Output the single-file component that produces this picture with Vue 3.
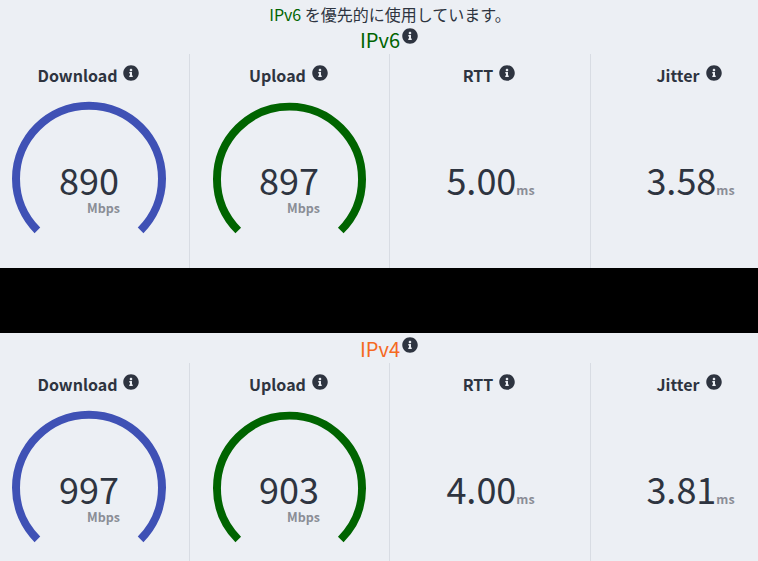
<template>
  <div class="page">
    <p class="notice"><span class="v6">IPv6</span> を優先的に使用しています。</p>
    <template v-for="(sec, i) in sections" :key="sec.name">
      <div v-if="i" class="band"></div>
      <section class="panel">
        <h2 class="family" :class="sec.cls">{{ sec.name }}<svg class="info up" viewBox="0 0 512 512"><path :d="infoPath" /></svg></h2>
        <div class="stats">
          <div v-for="s in sec.stats" :key="s.label" class="stat">
            <div class="label">{{ s.label }}<svg class="info" viewBox="0 0 512 512"><path :d="infoPath" /></svg></div>
            <div v-if="s.gauge" class="gauge">
              <svg :width="s.size" :height="s.size" viewBox="0 -0.7 154 154">
                <path d="M25.4 128.6 A73 73 0 1 1 128.6 128.6" fill="none" :stroke="s.gauge" stroke-width="8" />
              </svg>
              <div class="gauge-value">{{ s.value }}</div>
              <div class="gauge-unit">Mbps</div>
            </div>
            <div v-else class="plain"><span class="num">{{ s.value }}</span><span class="ms">ms</span></div>
          </div>
        </div>
      </section>
    </template>
  </div>
</template>

<script setup>
const infoPath = 'M256 8C119.043 8 8 119.083 8 256c0 136.997 111.043 248 248 248s248-111.003 248-248C504 119.083 392.957 8 256 8zm0 110c23.196 0 42 18.804 42 42s-18.804 42-42 42-42-18.804-42-42 18.804-42 42-42zm56 254c0 6.627-5.373 12-12 12h-88c-6.627 0-12-5.373-12-12v-24c0-6.627 5.373-12 12-12h12v-64h-12c-6.627 0-12-5.373-12-12v-24c0-6.627 5.373-12 12-12h64c6.627 0 12 5.373 12 12v100h12c6.627 0 12 5.373 12 12v24z'

const blue = '#3f51b5'
const green = '#006400'

const sections = [
  {
    name: 'IPv6',
    cls: 'v6',
    stats: [
      { label: 'Download', value: '890', gauge: blue, size: 154 },
      { label: 'Upload', value: '897', gauge: green, size: 153 },
      { label: 'RTT', value: '5.00' },
      { label: 'Jitter', value: '3.58' }
    ]
  },
  {
    name: 'IPv4',
    cls: 'v4',
    stats: [
      { label: 'Download', value: '997', gauge: blue, size: 154 },
      { label: 'Upload', value: '903', gauge: green, size: 153 },
      { label: 'RTT', value: '4.00' },
      { label: 'Jitter', value: '3.81' }
    ]
  }
]
</script>

<style>
html, body { margin: 0; background: #eceff4; overflow: hidden; }
</style>

<style scoped>
.page {
  width: 758px;
  height: 561px;
  overflow: hidden;
  background: #eceff4;
  color: #2e3440;
  font-family: "Noto Sans CJK JP", "Noto Sans", sans-serif;
}
.notice {
  margin: 0;
  width: 780px;
  height: 24px;
  line-height: 28px;
  font-size: 16px;
  text-align: center;
}
.v6 { color: #006400; }
.v4 { color: #f5691f; }
.band { height: 65px; background: #000; }
.family {
  margin: 0;
  width: 778px;
  height: 30px;
  line-height: 32px;
  font-size: 20px;
  font-weight: 400;
  text-align: center;
}
.info {
  width: 16px;
  height: 16px;
  fill: #2e3440;
  margin-left: 6px;
  vertical-align: 1px;
}
.info.up {
  margin-left: 2px;
  vertical-align: 4px;
}
.stats {
  display: grid;
  grid-template-columns: 200px 200px 201px 198px;
  margin-left: -10px;
  width: 799px;
  height: 214px;
}
.stat {
  display: flex;
  flex-direction: column;
  align-items: center;
  padding-right: 1px;
  border-right: 1px solid #d8dce3;
  box-sizing: border-box;
}
.stat:last-child { border-right: 0; }
.label {
  margin-top: 7px;
  padding-right: 1px;
  height: 28px;
  line-height: 28px;
  font-size: 16px;
  font-weight: 700;
  white-space: nowrap;
}
.gauge {
  position: relative;
  display: flex;
  justify-content: center;
  align-items: flex-end;
  width: 154px;
  height: 154px;
  margin-top: 12px;
}
.gauge svg { display: block; }
.gauge-value {
  position: absolute;
  left: 0;
  right: 0;
  top: 60px;
  line-height: 36px;
  font-size: 36px;
  text-align: center;
}
.gauge-unit {
  position: absolute;
  left: 75px;
  top: 98px;
  line-height: 18px;
  font-size: 12.5px;
  font-weight: 700;
  color: #8a8d96;
}
.plain {
  margin-top: 65px;
  margin-left: 2px;
  display: flex;
  align-items: baseline;
  line-height: 50px;
}
.num { font-size: 36px; }
.ms {
  font-size: 12.5px;
  font-weight: 700;
  color: #8a8d96;
}
</style>
